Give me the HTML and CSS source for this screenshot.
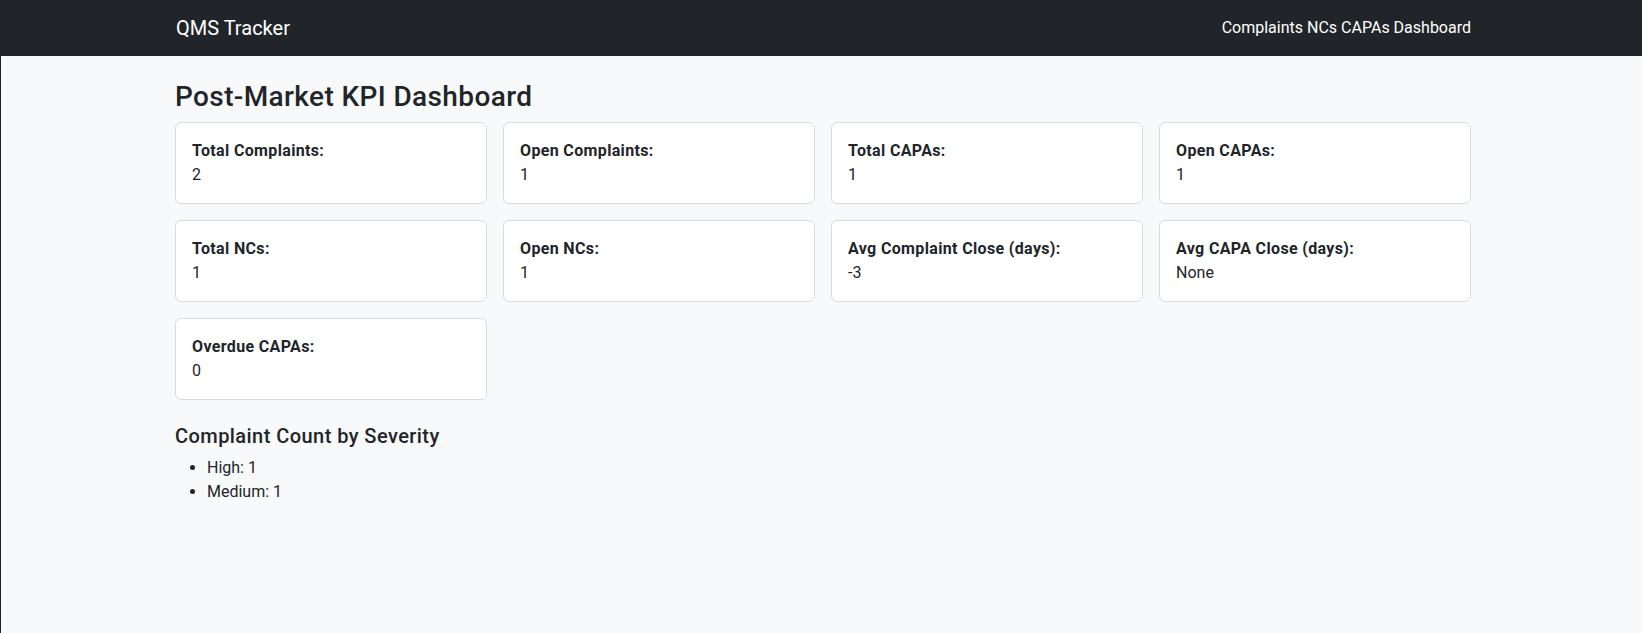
FILE: index.html
```html
<!DOCTYPE html>
<html lang="en">
<head>
<meta charset="utf-8">
<title>QMS Tracker</title>
<link rel="stylesheet" href="styles.css">
</head>
<body>
<nav class="navbar">
  <div class="container nav-inner">
    <a class="brand" href="#">QMS Tracker</a>
    <div class="nav-links">
      <a href="#">Complaints</a> <a href="#">NCs</a> <a href="#">CAPAs</a> <a href="#">Dashboard</a>
    </div>
  </div>
</nav>
<main class="container">
  <h3 class="page-title">Post-Market KPI Dashboard</h3>
  <div class="kpi-grid">
    <div class="card"><strong>Total Complaints:</strong><div>2</div></div>
    <div class="card"><strong>Open Complaints:</strong><div>1</div></div>
    <div class="card"><strong>Total CAPAs:</strong><div>1</div></div>
    <div class="card"><strong>Open CAPAs:</strong><div>1</div></div>
    <div class="card"><strong>Total NCs:</strong><div>1</div></div>
    <div class="card"><strong>Open NCs:</strong><div>1</div></div>
    <div class="card"><strong>Avg Complaint Close (days):</strong><div>-3</div></div>
    <div class="card"><strong>Avg CAPA Close (days):</strong><div>None</div></div>
    <div class="card"><strong>Overdue CAPAs:</strong><div>0</div></div>
  </div>
  <h5 class="section-title">Complaint Count by Severity</h5>
  <ul class="severity">
    <li>High: 1</li>
    <li>Medium: 1</li>
  </ul>
</main>
</body>
</html>
```
FILE: styles.css
```css
* { box-sizing: border-box; }
html, body { height: 100%; }
body {
  margin: 0;
  background: #f8f9fa;
  color: #212529;
  font-family: Roboto, "Noto Sans", "Liberation Sans", sans-serif;
  font-size: 16px;
  line-height: 1.5;
  border-left: 1px solid #231f24;
}
.container {
  width: 1296px;
  margin-left: 174px;
}
.navbar {
  background: #212529;
  height: 56px;
  padding: 8px 0;
}
.nav-inner {
  display: flex;
  justify-content: space-between;
  align-items: center;
  height: 40px;
}
.brand {
  color: #fff;
  text-decoration: none;
  font-size: 20px;
  line-height: 30px;
  padding: 5px 0 5px 1px;
}
.nav-links { line-height: 24px; }
.nav-links a {
  color: #fff;
  text-decoration: none;
}
.page-title {
  margin: 24px 0 8px;
  font-size: 28px;
  font-weight: 500;
  line-height: 1.2;
  letter-spacing: 0.38px;
}
.kpi-grid {
  display: grid;
  grid-template-columns: repeat(4, 1fr);
  gap: 16px;
}
.card {
  background: #fff;
  border: 1px solid #d9dadc;
  border-radius: 6px;
  padding: 16px;
}
.card strong {
  font-weight: 700;
  display: block;
  letter-spacing: 0.35px;
}
.section-title {
  margin: 24px 0 8px;
  font-size: 20px;
  font-weight: 500;
  line-height: 1.2;
  letter-spacing: 0.44px;
}
.severity {
  margin: 0;
  padding-left: 32px;
}
```
